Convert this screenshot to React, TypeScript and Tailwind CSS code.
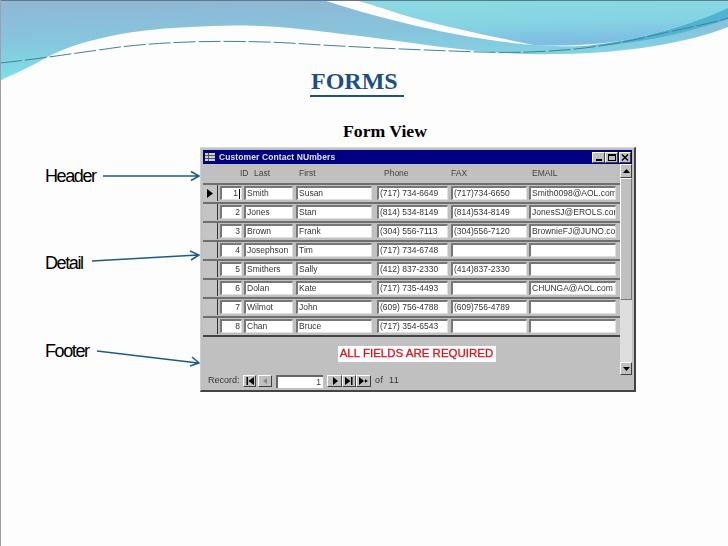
import type { ReactNode } from "react";

const rows = [
  ["1", "Smith", "Susan", "(717) 734-6649", "(717)734-6650", "Smith0098@AOL.com"],
  ["2", "Jones", "Stan", "(814) 534-8149", "(814)534-8149", "JonesSJ@EROLS.com"],
  ["3", "Brown", "Frank", "(304) 556-7113", "(304)556-7120", "BrownieFJ@JUNO.com"],
  ["4", "Josephson", "Tim", "(717) 734-6748", "", ""],
  ["5", "Smithers", "Sally", "(412) 837-2330", "(414)837-2330", ""],
  ["6", "Dolan", "Kate", "(717) 735-4493", "", "CHUNGA@AOL.com"],
  ["7", "Wilmot", "John", "(609) 756-4788", "(609)756-4789", ""],
  ["8", "Chan", "Bruce", "(717) 354-6543", "", ""],
];

const headers = ["ID", "Last", "First", "Phone", "FAX", "EMAIL"];
const cellWidths = ["w-[22px]", "w-[49px]", "w-[76px]", "w-[71px]", "w-[76px]", "w-[87px]"];

function Waves() {
  return (
    <svg className="absolute left-0 top-0" width="728" height="546" viewBox="0 0 728 546">
      <defs>
        <linearGradient id="left" x1="0" y1="0" x2="0.12" y2="1">
          <stop offset="0" stopColor="#90b6d6" />
          <stop offset="0.5" stopColor="#86c6dc" />
          <stop offset="1" stopColor="#7fe0ea" />
        </linearGradient>
        <linearGradient id="right" x1="0" y1="0" x2="0.3" y2="1">
          <stop offset="0" stopColor="#8cdbe2" />
          <stop offset="0.6" stopColor="#84d4e4" />
          <stop offset="1" stopColor="#7fbde2" />
        </linearGradient>
      </defs>
      <path
        d="M0 0 L323 0 C390 22 470 40 534 45 C570 47 590 47 610 44 C650 36 700 22 728 9 L728 27 C690 42 630 53 560 54 C510 55 470 51 420 44 C370 37 320 31 279 27 C250 25 220 25 190 27 C120 30 70 43 40 61 C25 70 10 75 0 81 Z"
        fill="url(#left)"
      />
      <path
        d="M355 0 L728 0 L728 9 C700 20 670 30 640 37 C610 44 570 47 534 45 C490 36 440 26 400 14 C385 9 370 4 355 0 Z"
        fill="url(#right)"
      />
      <path d="M570 47 C630 44 690 25 728 8 L728 19 C680 35 630 46 570 47 Z" fill="#4fb4d0" />
      <path
        d="M0 63 C30 60 70 54 120 47 C170 41 230 40 290 43 C350 47 420 50 480 52 C540 54 600 49 650 36 C680 29 710 24 728 18"
        fill="none"
        stroke="#3f8398"
        strokeWidth="1"
        strokeDasharray="22 3"
      />
      <path d="M0 0.5 H728" stroke="#5f7a8c" strokeWidth="1" />
      <path d="M0.5 0 V546" stroke="#9aa2a8" strokeWidth="1" />
    </svg>
  );
}

function Callout({ label, children, className }: { label: string; children: ReactNode; className: string }) {
  return (
    <div className={`flex h-5 items-center ${className}`}>
      <div className="w-[103px] pl-[45px] text-[18px] leading-5 tracking-[-1.4px] text-black">{label}</div>
      <svg className="overflow-visible" width="97" height="20" viewBox="0 0 97 20" fill="none" stroke="#1f5a85">
        {children}
      </svg>
    </div>
  );
}

function Raised({ className, children }: { className: string; children?: ReactNode }) {
  return (
    <div
      className={`flex items-center justify-center border border-b-[#404040] border-l-white border-r-[#404040] border-t-white bg-[#c0c0c0] ${className}`}
    >
      {children}
    </div>
  );
}

function NavIcon({ d, color = "#000" }: { d: string; color?: string }) {
  return (
    <svg width="10" height="8" viewBox="0 0 10 8">
      <path d={d} fill={color} />
    </svg>
  );
}

function FormWindow() {
  return (
    <div className="h-[245px] w-[436px] border-b-2 border-l border-r-2 border-t border-b-[#444] border-l-[#cfcfcf] border-r-[#444] border-t-[#dcdcdc] bg-[#c0c0c0] pl-[2px] pr-[2px] pt-[2px] text-[8.5px] text-[#333] blur-[0.3px]">
      <div className="flex h-[14px] items-center bg-[#000080] pl-[1px] pr-[1px]">
        <svg width="12" height="10" viewBox="0 0 12 10" className="mr-[3px]">
          <rect x="1" y="1" width="10" height="8" fill="#d0d0d0" />
          <path d="M1 3.5H11M1 6.5H11M4.5 1V9" stroke="#555" strokeWidth="1" />
        </svg>
        <span className="flex-1 text-[8.5px] font-bold tracking-[0.1px] text-[#dfe3ee]">Customer Contact NUmbers</span>
        <Raised className="h-[11px] w-[13px]">
          <span className="mt-[6px] h-[2px] w-[6px] bg-black" />
        </Raised>
        <Raised className="h-[11px] w-[13px]">
          <span className="h-[7px] w-[8px] border border-t-2 border-black" />
        </Raised>
        <Raised className="ml-[1px] h-[11px] w-[12px]">
          <svg width="8" height="7" viewBox="0 0 8 7">
            <path d="M1 0.5L7 6.5M7 0.5L1 6.5" stroke="#000" strokeWidth="1.4" />
          </svg>
        </Raised>
      </div>
      <div className="flex items-start">
        <div className="w-[417px]">
          <div className="flex h-[19px] items-center pl-[37px] text-[#444]">
            <span className="w-[14px]">{headers[0]}</span>
            <span className="w-[45px]">{headers[1]}</span>
            <span className="w-[85px]">{headers[2]}</span>
            <span className="w-[67px]">{headers[3]}</span>
            <span className="w-[81px]">{headers[4]}</span>
            <span>{headers[5]}</span>
          </div>
          <div className="grid h-[154px] grid-rows-8 border-b-2 border-b-[#444]">
            {rows.map((row, i) => (
              <div key={row[0]} className="flex items-stretch border-t-2 border-t-[#6f6f6f] pb-[1px]">
                <div className="flex w-[15px] shrink-0 items-center justify-center border-r border-r-[#333] bg-[#c4c4c4]">
                  {i === 0 && (
                    <svg width="6" height="9" viewBox="0 0 6 9">
                      <path d="M0 0L6 4.5L0 9Z" fill="#000" />
                    </svg>
                  )}
                </div>
                <div className="flex items-center pl-[2px]">
                  {row.map((cell, c) => (
                    <div
                      key={c}
                      className={`flex h-[14px] items-center overflow-hidden whitespace-nowrap border-l-2 border-t-2 border-b border-r border-b-[#e0e0e0] border-l-[#777] border-r-[#e0e0e0] border-t-[#777] bg-white pl-[1px] ${cellWidths[c]} ${c === 0 ? "mr-[2px] justify-end pr-[1px]" : ""} ${c === 1 ? "mr-[3px]" : ""} ${c === 2 ? "mr-[5px]" : ""} ${c === 3 ? "mr-[3px]" : ""} ${c === 4 ? "mr-[2px]" : ""}`}
                    >
                      {cell}
                      {c === 0 && i === 0 && <span className="ml-[1px] h-[10px] w-[1px] bg-black" />}
                    </div>
                  ))}
                </div>
              </div>
            ))}
          </div>
          <div className="flex h-[37px] justify-center pt-[9px]">
            <div className="ml-[10px] flex h-[16px] w-[158px] items-center justify-center bg-white text-[11.5px] text-[#d8141e] [-webkit-text-stroke:0.3px_#d8141e]">
              ALL FIELDS ARE REQUIRED
            </div>
          </div>
          <div className="flex h-[14px] items-center pl-[5px]">
            <span className="w-[35px] text-[9px]">Record:</span>
            <Raised className="h-[12px] w-[13px]">
              <NavIcon d="M1.5 0H3V8H1.5ZM9 0V8L3.5 4Z" />
            </Raised>
            <Raised className="ml-[2px] h-[12px] w-[14px]">
              <NavIcon d="M7 1V7L3 4Z" color="#8a8a8a" />
            </Raised>
            <div className="ml-[4px] flex h-[13px] w-[47px] items-center justify-end border-l-2 border-t-2 border-l-[#666] border-t-[#666] bg-white pr-[2px]">
              1
            </div>
            <Raised className="ml-[4px] h-[12px] w-[15px]">
              <NavIcon d="M3 0V8L8 4Z" />
            </Raised>
            <Raised className="h-[12px] w-[14px]">
              <NavIcon d="M1 0V8L6.5 4ZM7 0H8.5V8H7Z" />
            </Raised>
            <Raised className="h-[12px] w-[15px]">
              <NavIcon d="M0 0V8L5 4ZM6 2.5H7V3.5L8 2.8L8.5 3.6L7.5 4L8.5 4.4L8 5.2L7 4.5V5.5H6V4.5L5.6 4.2V3.8L6 3.5Z" />
            </Raised>
            <span className="ml-[4px] text-[9px] tracking-[0.4px]">of&nbsp; 11</span>
          </div>
        </div>
        <div className="flex h-[211px] w-[12px] flex-col bg-[#dedede]">
          <Raised className="h-[14px] w-[12px]">
            <svg width="7" height="4" viewBox="0 0 7 4">
              <path d="M3.5 0L7 4H0Z" fill="#000" />
            </svg>
          </Raised>
          <div className="h-[122px] w-[12px] border border-b-[#777] border-l-white border-r-[#777] border-t-white bg-[#c0c0c0]" />
          <div className="flex-1" />
          <Raised className="h-[13px] w-[12px]">
            <svg width="7" height="4" viewBox="0 0 7 4">
              <path d="M0 0H7L3.5 4Z" fill="#000" />
            </svg>
          </Raised>
        </div>
      </div>
    </div>
  );
}

export default function App() {
  return (
    <div className="relative h-[546px] w-[728px] overflow-hidden bg-[#fdfdfd] font-['Liberation_Sans',Arial,sans-serif]">
      <Waves />
      <div className="relative">
        <div className="pl-[310px] pt-[67px]">
          <h1 className="w-[94px] border-b-2 border-b-[#1f5078] pb-[1px] pl-[1px] pt-[1px] font-['Liberation_Serif',serif] text-[24px] font-bold leading-[26px] text-[#1c4f84]">
            FORMS
          </h1>
        </div>
        <div className="pl-[343px] pt-[24px] font-['Liberation_Serif',serif] text-[17.7px] font-bold leading-[20px] text-black">
          Form View
        </div>
        <div className="mt-[6px] flex">
          <div className="w-[200px]">
            <Callout label="Header" className="mt-[19px]">
              <path d="M0 10H95M88 5.5L96 10L88 14.5" strokeWidth="1.5" />
            </Callout>
            <Callout label="Detail" className="mt-[67px]">
              <path d="M-11 8L95 2M87 -2L96 2L88 7" strokeWidth="1.5" />
            </Callout>
            <Callout label="Footer" className="mt-[68px]">
              <path d="M-6 10L95 22M89 16L96 22L87 25" strokeWidth="1.5" />
            </Callout>
          </div>
          <FormWindow />
        </div>
      </div>
    </div>
  );
}
